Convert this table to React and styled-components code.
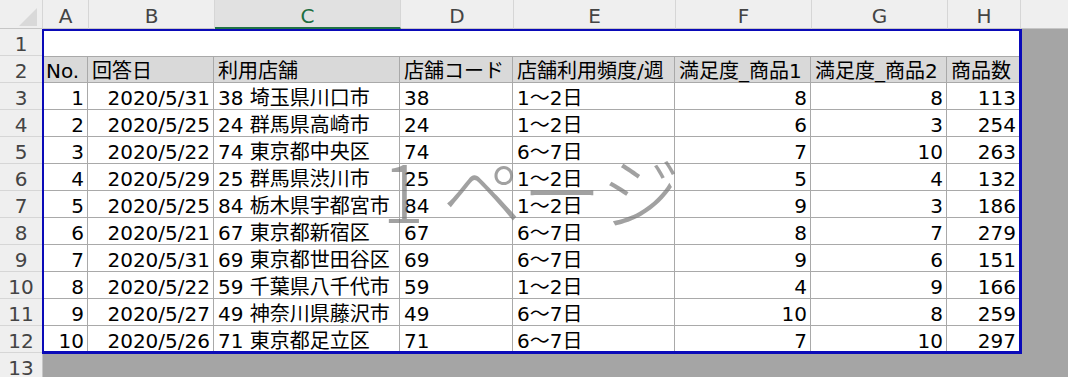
import React from "react";
import styled, { createGlobalStyle } from "styled-components";

const GlobalStyle = createGlobalStyle`
  html, body {
    margin: 0;
    padding: 0;
    background: #ffffff;
  }
  #root {
    width: 1068px;
    height: 377px;
    overflow: hidden;
  }
`;

const FONT = `"DejaVu Sans", "Noto Sans CJK JP", sans-serif`;

const columns = [
  { key: "A", width: 46 },
  { key: "B", width: 126 },
  { key: "C", width: 186 },
  { key: "D", width: 113 },
  { key: "E", width: 162 },
  { key: "F", width: 136 },
  { key: "G", width: 136 },
  { key: "H", width: 73 },
];

const headers = [
  "No.",
  "回答日",
  "利用店舗",
  "店舗コード",
  "店舗利用頻度/週",
  "満足度_商品1",
  "満足度_商品2",
  "商品数",
];

// right aligned columns
const alignRight = [true, true, false, false, false, true, true, true];

const rows = [
  [1, "2020/5/31", "38 埼玉県川口市", "38", "1～2日", 8, 8, 113],
  [2, "2020/5/25", "24 群馬県高崎市", "24", "1～2日", 6, 3, 254],
  [3, "2020/5/22", "74 東京都中央区", "74", "6～7日", 7, 10, 263],
  [4, "2020/5/29", "25 群馬県渋川市", "25", "1～2日", 5, 4, 132],
  [5, "2020/5/25", "84 栃木県宇都宮市", "84", "1～2日", 9, 3, 186],
  [6, "2020/5/21", "67 東京都新宿区", "67", "6～7日", 8, 7, 279],
  [7, "2020/5/31", "69 東京都世田谷区", "69", "6～7日", 9, 6, 151],
  [8, "2020/5/22", "59 千葉県八千代市", "59", "1～2日", 4, 9, 166],
  [9, "2020/5/27", "49 神奈川県藤沢市", "49", "6～7日", 10, 8, 259],
  [10, "2020/5/26", "71 東京都足立区", "71", "6～7日", 7, 10, 297],
];

const Sheet = styled.div`
  display: flex;
  flex-direction: column;
  width: 1068px;
  height: 377px;
  font-family: ${FONT};
  font-size: 20px;
  color: #000;
`;

const ColumnHeaderBar = styled.div`
  display: flex;
  height: 29px;
  flex-shrink: 0;
  background: #efefef;
`;

const Corner = styled.div`
  width: 43px;
  flex-shrink: 0;
  box-sizing: border-box;
  display: flex;
  justify-content: flex-end;
  align-items: flex-end;
  padding: 0 5px 2px 0;
  border-right: 1px solid #d6d6d6;
  border-bottom: 1px solid #c6c6c6;
`;

const CornerTriangle = styled.div`
  width: 0;
  height: 0;
  border-left: 18px solid transparent;
  border-bottom: 18px solid #d9d9d9;
`;

const ColHead = styled.div`
  width: ${(p) => p.$width}px;
  flex-shrink: 0;
  box-sizing: border-box;
  text-align: center;
  line-height: 26px;
  padding-top: 3px;
  color: ${(p) => (p.$selected ? "#1e6e42" : "#444")};
  background: ${(p) => (p.$selected ? "#e1e1e1" : "transparent")};
  border-right: 1px solid #d6d6d6;
  border-bottom: ${(p) => (p.$selected ? "2px solid #217346" : "1px solid #c6c6c6")};
`;

const HeaderFiller = styled.div`
  flex: 1;
  border-bottom: 1px solid #c6c6c6;
`;

const Body = styled.div`
  display: flex;
  flex: 1;
  min-height: 0;
`;

const RowHeaderColumn = styled.div`
  width: 43px;
  flex-shrink: 0;
  display: flex;
  flex-direction: column;
  background: #efefef;
  border-right: 1px solid #c6c6c6;
  box-sizing: border-box;
`;

const RowNum = styled.div`
  height: 27px;
  flex-shrink: 0;
  box-sizing: border-box;
  text-align: center;
  line-height: 24px;
  padding-top: 3px;
  color: #444;
  border-bottom: 1px solid #d6d6d6;
`;

const Canvas = styled.div`
  flex: 1;
  background: #a5a5a5;
`;

const PrintArea = styled.div`
  position: relative;
  width: 978px;
  height: 324px;
  background: #ffffff;
  margin-left: -1px;

  &::after {
    content: "";
    position: absolute;
    top: 0;
    left: 0;
    right: -2px;
    bottom: -1px;
    border-top: 2px solid #0a0ab8;
    border-left: 2px solid #0a0ab8;
    border-right: 3px solid #0a0ab8;
    border-bottom: 3px solid #0a0ab8;
    pointer-events: none;
  }
`;

const Table = styled.div`
  display: grid;
  grid-template-columns: ${columns.map((c) => `${c.width}px`).join(" ")};
  grid-template-rows: repeat(12, 27px);
`;

const BlankRow = styled.div`
  grid-column: 1 / -1;
`;

const Cell = styled.div`
  box-sizing: border-box;
  height: 27px;
  padding: 3px 3px 0 4px;
  line-height: 24px;
  white-space: nowrap;
  text-align: ${(p) => (p.$right ? "right" : "left")};
  background: ${(p) => (p.$head ? "#d9d9d9" : "transparent")};
  border-right: 1px solid #a9a9a9;
  border-bottom: 1px solid #a9a9a9;
  border-top: ${(p) => (p.$head ? "1px solid #a9a9a9" : "none")};
  ${(p) => (p.$head ? "padding-top: 2px;" : "")}
`;

const Watermark = styled.div`
  position: absolute;
  inset: 0;
  display: flex;
  align-items: center;
  justify-content: center;
  font-family: "Noto Sans CJK JP", sans-serif;
  font-weight: 300;
  font-size: 80px;
  color: rgba(125, 125, 125, 0.72);
  pointer-events: none;
  padding-bottom: 6px;
  box-sizing: border-box;
`;

export default function App() {
  return (
    <>
      <GlobalStyle />
      <Sheet>
        <ColumnHeaderBar>
          <Corner>
            <CornerTriangle />
          </Corner>
          {columns.map((c) => (
            <ColHead key={c.key} $width={c.width} $selected={c.key === "C"}>
              {c.key}
            </ColHead>
          ))}
          <HeaderFiller />
        </ColumnHeaderBar>

        <Body>
          <RowHeaderColumn>
            {Array.from({ length: 13 }, (_, i) => (
              <RowNum key={i}>{i + 1}</RowNum>
            ))}
          </RowHeaderColumn>

          <Canvas>
            <PrintArea>
              <Table>
                <BlankRow />
                {headers.map((h) => (
                  <Cell key={h} $head>
                    {h}
                  </Cell>
                ))}
                {rows.map((r) =>
                  r.map((v, i) => (
                    <Cell key={`${r[0]}-${i}`} $right={alignRight[i]}>
                      {v}
                    </Cell>
                  ))
                )}
              </Table>
              <Watermark>1 ページ</Watermark>
            </PrintArea>
          </Canvas>
        </Body>
      </Sheet>
    </>
  );
}
